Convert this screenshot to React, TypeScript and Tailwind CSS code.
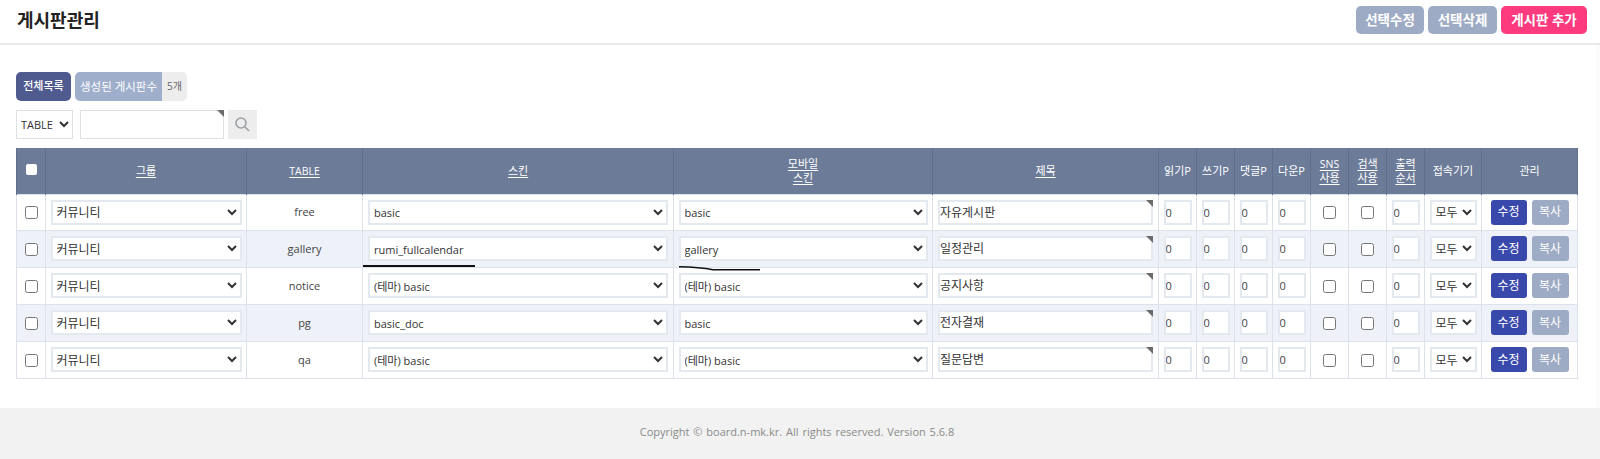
const font = "font-['Open_Sans','Noto_Sans_CJK_KR',sans-serif]";

type Row = { table: string; skin: string; mskin: string; title: string; alt?: boolean };

const rows: Row[] = [
  { table: "free", skin: "basic", mskin: "basic", title: "자유게시판" },
  { table: "gallery", skin: "rumi_fullcalendar", mskin: "gallery", title: "일정관리", alt: true },
  { table: "notice", skin: "(테마) basic", mskin: "(테마) basic", title: "공지사항" },
  { table: "pg", skin: "basic_doc", mskin: "basic", title: "전자결재", alt: true },
  { table: "qa", skin: "(테마) basic", mskin: "(테마) basic", title: "질문답변" },
];

const widths = [29, 201, 116, 311, 259, 226, 38, 38, 38, 38, 38, 38, 38, 57, 96];

function Sel({ value, className }: { value: string; className: string }) {
  return (
    <select
      defaultValue={value}
      className={`block h-[25px] rounded-none border-2 border-[#e4e8ef] bg-white pl-0 pt-[1px] text-[#333] ${className}`}
    >
      <option value={value}>{value}</option>
    </select>
  );
}

function Num() {
  return (
    <input
      readOnly
      value="0"
      className="mx-auto block h-[25px] w-[28px] border-2 border-[#e4e8ef] bg-white pl-0 text-[11px] text-[#444]"
    />
  );
}

function Corner({ offset }: { offset: string }) {
  return <span className={`absolute h-0 w-0 border-l-[7px] border-t-[7px] border-l-transparent border-t-[#6b6b6b] ${offset}`} />;
}

function Th({ children }: { children: React.ReactNode }) {
  return <th className="border-x border-[#5f6f8c] p-0 text-center text-[11px] font-normal leading-[14px] text-white">{children}</th>;
}

function U({ children }: { children: React.ReactNode }) {
  return <span className="underline underline-offset-2">{children}</span>;
}

function Td({ children }: { children?: React.ReactNode }) {
  return <td className="border border-[#dde1ea] p-0 text-center">{children}</td>;
}

function Check() {
  return <input type="checkbox" readOnly className="mx-auto mt-[1px] block h-[13px] w-[13px]" />;
}

export default function App() {
  return (
    <div className={`${font} min-h-[459px] bg-white text-[#333]`}>
      <header className="flex h-[45px] items-start justify-between border-b-2 border-[#e8e9eb] pl-[17px] pr-[13px]">
        <h1 className="mt-[8px] text-[18px] font-bold leading-[25px] text-[#222]">게시판관리</h1>
        <div className="mt-[6px] flex gap-[4px]">
          <button className="h-[28px] w-[68px] rounded-[5px] bg-[#9eabc4] text-[13.5px] font-bold text-white">선택수정</button>
          <button className="h-[28px] w-[69px] rounded-[5px] bg-[#9eabc4] text-[13.5px] font-bold text-white">선택삭제</button>
          <button className="h-[28px] w-[86px] rounded-[5px] bg-[#fd3a7e] text-[13.5px] font-bold text-white">게시판 추가</button>
        </div>
      </header>

      <main className="border-r-[4px] border-[#fbfbfb] pl-[16px] pt-[27px]">
        <div className="flex h-[29px] gap-[4px] text-[11px]">
          <div className="flex w-[55px] items-center justify-center rounded-[5px] bg-[#4f5b8f] font-medium text-white">전체목록</div>
          <div className="flex overflow-hidden rounded-[5px]">
            <div className="flex w-[87px] items-center justify-center bg-[#9eaecb] text-[11.5px] text-white">생성된 게시판수</div>
            <div className="flex w-[25px] items-center justify-center bg-[#ededed] text-[10px] text-[#666]">5개</div>
          </div>
        </div>

        <div className="mt-[9px] flex h-[29px] items-stretch">
          <select defaultValue="TABLE" className="h-[29px] w-[57px] rounded-none border border-[#e0e0e0] bg-white pl-0 text-[11px] text-[#333]">
            <option>TABLE</option>
          </select>
          <div className="relative ml-[7px] h-[29px] w-[144px] border border-[#e0e0e0] bg-white">
            <Corner offset="-right-px -top-px" />
          </div>
          <div className="ml-[4px] flex h-[29px] w-[29px] items-center justify-center bg-[#ededed]">
            <svg width="17" height="17" viewBox="0 0 17 17" fill="none" stroke="#9aa0a6" strokeWidth="1.6">
              <circle cx="7" cy="7" r="5" />
              <path d="M10.8 10.8 15 15" />
            </svg>
          </div>
        </div>

        <table className="mt-[9px] w-[1561px] table-fixed border-collapse text-[12px]">
          <colgroup>
            {widths.map((w, i) => (
              <col key={i} style={{ width: w }} />
            ))}
          </colgroup>
          <thead>
            <tr className="h-[46px] bg-[#6c7b98]">
              <Th><span className="mx-auto block h-[11px] w-[11px] -translate-y-[1px] rounded-[2px] bg-white" /></Th>
              <Th><U>그룹</U></Th>
              <Th><span className="text-[10.5px]"><U>TABLE</U></span></Th>
              <Th><U>스킨</U></Th>
              <Th><U>모바일</U><br /><U>스킨</U></Th>
              <Th><U>제목</U></Th>
              <Th>읽기P</Th>
              <Th>쓰기P</Th>
              <Th>댓글P</Th>
              <Th>다운P</Th>
              <Th><span className="text-[10.5px]"><U>SNS</U></span><br /><U>사용</U></Th>
              <Th><U>검색</U><br /><U>사용</U></Th>
              <Th><U>출력</U><br /><U>순서</U></Th>
              <Th>접속기기</Th>
              <Th>관리</Th>
            </tr>
          </thead>
          <tbody>
            {rows.map((r, i) => (
              <tr key={r.table} className={`${i === 0 ? "h-[36px]" : "h-[37px]"} ${r.alt ? "bg-[#eef1f8]" : "bg-white"}`}>
                <Td><Check /></Td>
                <Td>
                  <div className="flex justify-center">
                    <Sel value="커뮤니티" className="w-[191px] text-[12px]" />
                  </div>
                </Td>
                <Td><span className="text-[11px] text-[#444]">{r.table}</span></Td>
                <Td>
                  <div className="relative flex justify-center">
                    <Sel value={r.skin} className="w-[300px] text-[11px]" />
                    {r.table === "gallery" && <span className="absolute left-0 top-[29px] h-[2px] w-[112px] bg-[#111]" />}
                  </div>
                </Td>
                <Td>
                  <div className="relative flex justify-center">
                    <Sel value={r.mskin} className="w-[249px] text-[11px]" />
                    {r.table === "gallery" && (
                      <svg className="absolute left-[5px] top-[30px]" width="82" height="5" viewBox="0 0 82 5" fill="none" stroke="#111" strokeWidth="1.6">
                        <path d="M0 .8C12 1 22 1.4 34 3.8H81" />
                      </svg>
                    )}
                  </div>
                </Td>
                <Td>
                  <div className="relative mx-auto h-[25px] w-[215px] border-2 border-[#e4e8ef] bg-white text-left text-[12px] leading-[21px] text-[#333]">
                    {r.title}
                    <Corner offset="-right-[2px] -top-[2px]" />
                  </div>
                </Td>
                <Td><Num /></Td>
                <Td><Num /></Td>
                <Td><Num /></Td>
                <Td><Num /></Td>
                <Td><Check /></Td>
                <Td><Check /></Td>
                <Td><Num /></Td>
                <Td>
                  <div className="flex justify-center">
                    <Sel value="모두" className="w-[47px] text-[12px]" />
                  </div>
                </Td>
                <Td>
                  <div className="flex justify-center gap-[5px]">
                    <button className="h-[25px] w-[36px] rounded-[3px] bg-[#3949ab] text-[12px] text-white">수정</button>
                    <button className="h-[25px] w-[37px] rounded-[3px] bg-[#9eabc4] text-[12px] text-white">복사</button>
                  </div>
                </Td>
              </tr>
            ))}
          </tbody>
        </table>
        <div className="h-[29px]" />
      </main>

      <footer className="flex h-[52px] items-center justify-center bg-[#f2f2f2] pb-[2px] pr-[6px] text-[11px] text-[#8a8a8a] [word-spacing:1px]">
        Copyright © board.n-mk.kr. All rights reserved. Version 5.6.8
      </footer>
    </div>
  );
}
